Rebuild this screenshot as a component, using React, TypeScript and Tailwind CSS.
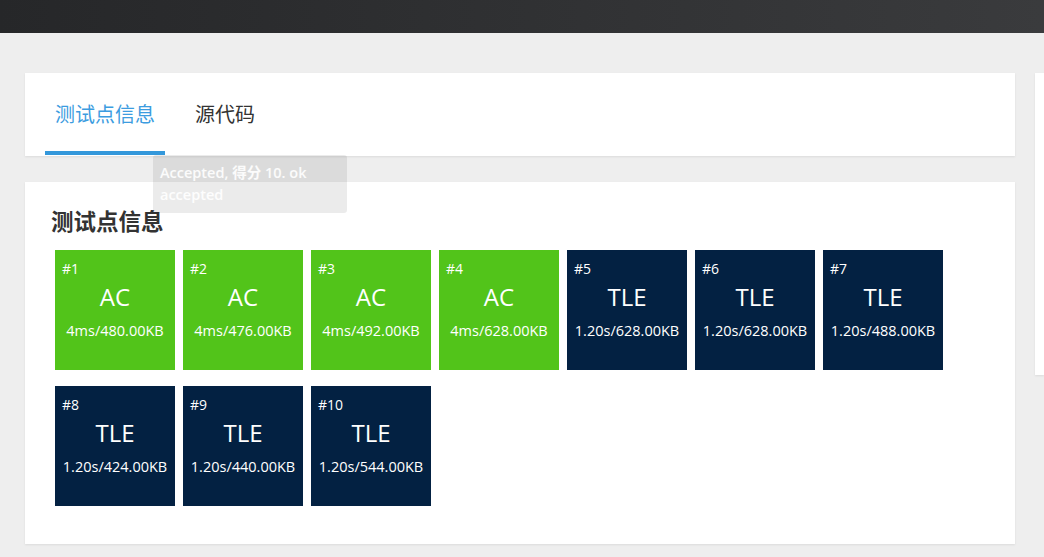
import React from 'react';

type Case = { id: number; status: 'AC' | 'TLE'; time: string; mem: string };

const cases: Case[] = [
  { id: 1, status: 'AC', time: '4ms', mem: '480.00KB' },
  { id: 2, status: 'AC', time: '4ms', mem: '476.00KB' },
  { id: 3, status: 'AC', time: '4ms', mem: '492.00KB' },
  { id: 4, status: 'AC', time: '4ms', mem: '628.00KB' },
  { id: 5, status: 'TLE', time: '1.20s', mem: '628.00KB' },
  { id: 6, status: 'TLE', time: '1.20s', mem: '628.00KB' },
  { id: 7, status: 'TLE', time: '1.20s', mem: '488.00KB' },
  { id: 8, status: 'TLE', time: '1.20s', mem: '424.00KB' },
  { id: 9, status: 'TLE', time: '1.20s', mem: '440.00KB' },
  { id: 10, status: 'TLE', time: '1.20s', mem: '544.00KB' },
];

const font = { fontFamily: '"Open Sans", "Noto Sans CJK SC", sans-serif' };

const CaseBox = ({ c }: { c: Case }) => (
  <div
    className={`w-[120px] h-[120px] text-white relative ${c.status === 'AC' ? 'bg-[#52c41a]' : 'bg-[#032142]'}`}
  >
    <div className="absolute left-[7px] top-[9px] text-[14px] font-medium leading-[20px]">#{c.id}</div>
    <div className="pt-[32px] text-center text-[24px] leading-[30px]">{c.status}</div>
    <div className="mt-[9px] text-center text-[14.5px] leading-[20px] whitespace-nowrap">
      {c.time}/{c.mem}
    </div>
  </div>
);

export default function App() {
  return (
    <div className="min-h-screen bg-[#eeeeee] overflow-hidden" style={font}>
      <div className="h-[33px] bg-gradient-to-r from-[#262729] to-[#3a3b3d]" />
      <div className="flex gap-5 pl-[25px] pt-[40px]">
        <div className="w-[990px] shrink-0">
          <div className="relative bg-white h-[83px] shadow-[0_1px_2px_rgba(0,0,0,0.08)] flex items-end pl-5">
            <div className="relative px-[10px] h-[83px] flex items-center text-[20px] text-[#3c9ce0]">
              测试点信息
              <div className="absolute left-0 right-0 bottom-[1px] h-[4px] bg-[#3498db]" />
            </div>
            <div className="ml-5 px-[10px] h-[83px] flex items-center text-[20px] text-[#333333]">源代码</div>
            <div className="absolute left-[128px] top-[82px] z-10 w-[194px] rounded-[3px] bg-black/[0.08] px-[7px] py-[7px] text-[14.5px] font-semibold leading-[22px] text-white/90">
              Accepted, 得分 10. ok accepted
            </div>
          </div>
          <div className="mt-[26px] bg-white shadow-[0_1px_2px_rgba(0,0,0,0.08)] pl-[30px] pr-[30px] pt-[24px] pb-[38px]">
            <h3 className="ml-[-4px] text-[22.5px] font-bold leading-[32px] text-[#333333] mb-[12px]">测试点信息</h3>
            <div className="flex flex-wrap gap-x-2 gap-y-4">
              {cases.map((c) => (
                <CaseBox key={c.id} c={c} />
              ))}
            </div>
          </div>
        </div>
        <div className="flex-1 bg-white h-[302px] shadow-[0_1px_2px_rgba(0,0,0,0.08)]" />
      </div>
    </div>
  );
}
